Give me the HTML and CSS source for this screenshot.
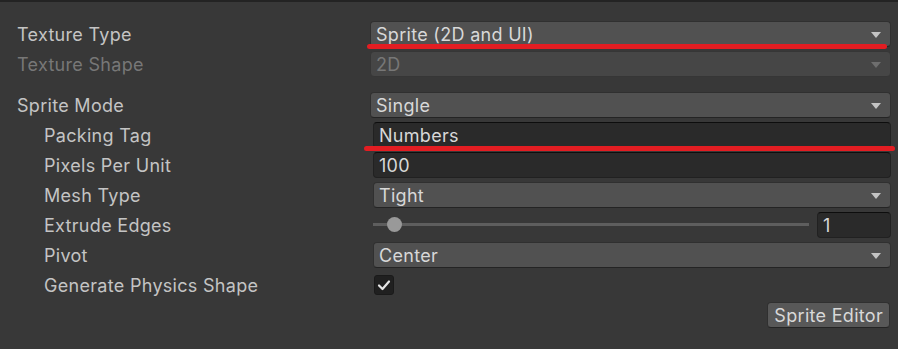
FILE: index.html
```html
<!DOCTYPE html>
<html lang="en">
<head>
    <meta charset="UTF-8">
    <meta name="viewport" content="width=device-width, initial-scale=1.0">
    <title>Texture Import Settings</title>
    <link rel="stylesheet" href="styles.css">
</head>
<body>

    <div class="inspector">
        <div class="row">
            <span class="label">Texture Type</span>
            <div class="control">
                <div class="dropdown"><span>Sprite (2D and UI)</span><i class="arrow"></i></div>
                <div class="marker"></div>
            </div>
        </div>
        <div class="row disabled">
            <span class="label">Texture Shape</span>
            <div class="control">
                <div class="dropdown"><span>2D</span><i class="arrow"></i></div>
            </div>
        </div>

        <div class="row section">
            <span class="label">Sprite Mode</span>
            <div class="control">
                <div class="dropdown"><span>Single</span><i class="arrow"></i></div>
            </div>
        </div>
        <div class="row sub">
            <span class="label">Packing Tag</span>
            <div class="control">
                <div class="field">Numbers</div>
                <div class="marker marker-wide"></div>
            </div>
        </div>
        <div class="row sub">
            <span class="label">Pixels Per Unit</span>
            <div class="control">
                <div class="field">100</div>
            </div>
        </div>
        <div class="row sub">
            <span class="label">Mesh Type</span>
            <div class="control">
                <div class="dropdown"><span>Tight</span><i class="arrow"></i></div>
            </div>
        </div>
        <div class="row sub">
            <span class="label">Extrude Edges</span>
            <div class="control slider-control">
                <div class="slider">
                    <div class="track"></div>
                    <div class="knob"></div>
                </div>
                <div class="field number">1</div>
            </div>
        </div>
        <div class="row sub">
            <span class="label">Pivot</span>
            <div class="control">
                <div class="dropdown"><span>Center</span><i class="arrow"></i></div>
            </div>
        </div>
        <div class="row sub">
            <span class="label">Generate Physics Shape</span>
            <div class="control">
                <div class="checkbox">
                    <svg width="14" height="12" viewBox="0 0 14 12">
                        <polyline points="2,6.5 5.5,10 12,2.5" fill="none" stroke="#e6e6e6" stroke-width="2.2" stroke-linecap="round" stroke-linejoin="round"/>
                    </svg>
                </div>
            </div>
        </div>

        <div class="actions">
            <button class="button">Sprite Editor</button>
        </div>
    </div>

</body>
</html>
```

FILE: styles.css
```css
:root {
    --bg-color: #383838;
    --label-color: #c4c4c4;
    --value-color: #d8d8d8;
    --disabled-color: #777777;
    --dropdown-bg: #515151;
    --field-bg: #2a2a2a;
    --marker-red: #e31d22;
}

body {
    margin: 0;
    padding: 0;
    background-color: var(--bg-color);
    font-family: Inter, 'Noto Sans', sans-serif;
    font-size: 18px;
    letter-spacing: 0.3px;
    color: var(--label-color);
}

.inspector {
    height: 347px;
    border-top: 2px solid #232323;
    box-sizing: border-box;
    padding: 19px 7px 0 17px;
    display: flex;
    flex-direction: column;
    gap: 4px;
}

.row {
    display: grid;
    grid-template-columns: 353px 521px;
    align-items: center;
    height: 26px;
}

.row.section {
    margin-top: 11px;
}

.row.sub .label {
    padding-left: 27px;
}

.row.sub .control {
    padding-left: 3px;
}

.control {
    position: relative;
    height: 26px;
    display: flex;
    align-items: center;
}

.label {
    white-space: nowrap;
}

.dropdown {
    flex: 1;
    height: 26px;
    box-sizing: border-box;
    display: flex;
    align-items: center;
    justify-content: space-between;
    padding: 1px 9px 0 5px;
    background-color: var(--dropdown-bg);
    border: 1px solid #303030;
    border-bottom-color: #242424;
    border-radius: 4px;
    color: var(--value-color);
}

.arrow {
    width: 0;
    height: 0;
    border-left: 5.5px solid transparent;
    border-right: 5.5px solid transparent;
    border-top: 6px solid #c4c4c4;
}

.disabled .label,
.disabled .dropdown {
    color: var(--disabled-color);
}

.disabled .dropdown {
    background-color: #464646;
    border-color: #363636;
}

.disabled .arrow {
    border-top-color: #6e6e6e;
}

.field {
    flex: 1;
    height: 26px;
    box-sizing: border-box;
    display: flex;
    align-items: center;
    padding: 1px 5px 0;
    background-color: var(--field-bg);
    border: 1px solid #212121;
    border-top-color: #0d0d0d;
    border-radius: 4px;
    color: var(--value-color);
}

.slider-control {
    gap: 8px;
}

.slider {
    position: relative;
    flex: 1;
    height: 26px;
}

.track {
    position: absolute;
    left: 0;
    right: 0;
    top: 11px;
    height: 3px;
    background-color: #5e5e5e;
}

.knob {
    position: absolute;
    left: 14px;
    top: 5px;
    width: 15px;
    height: 15px;
    border-radius: 50%;
    background-color: #999999;
}

.field.number {
    flex: 0 0 74px;
}

.checkbox {
    width: 20px;
    height: 20px;
    box-sizing: border-box;
    margin-left: 1px;
    display: flex;
    align-items: center;
    justify-content: center;
    background-color: #202020;
    border: 1px solid #1a1a1a;
    border-radius: 3px;
}

.actions {
    display: flex;
    justify-content: flex-end;
    padding-right: 1px;
}

.button {
    height: 26px;
    padding: 1px 6px 0;
    font-family: inherit;
    font-size: 18px;
    letter-spacing: 0.3px;
    color: var(--value-color);
    background-color: #585858;
    border: 1px solid #303030;
    border-bottom-color: #242424;
    border-radius: 4px;
}

/* red annotation strokes drawn over the fields */
.marker {
    position: absolute;
    left: -3px;
    right: 4px;
    bottom: -2px;
    height: 5px;
    border-radius: 3px;
    background-color: var(--marker-red);
}

.marker-wide {
    left: -6px;
    right: -4px;
    bottom: -3px;
}
```
